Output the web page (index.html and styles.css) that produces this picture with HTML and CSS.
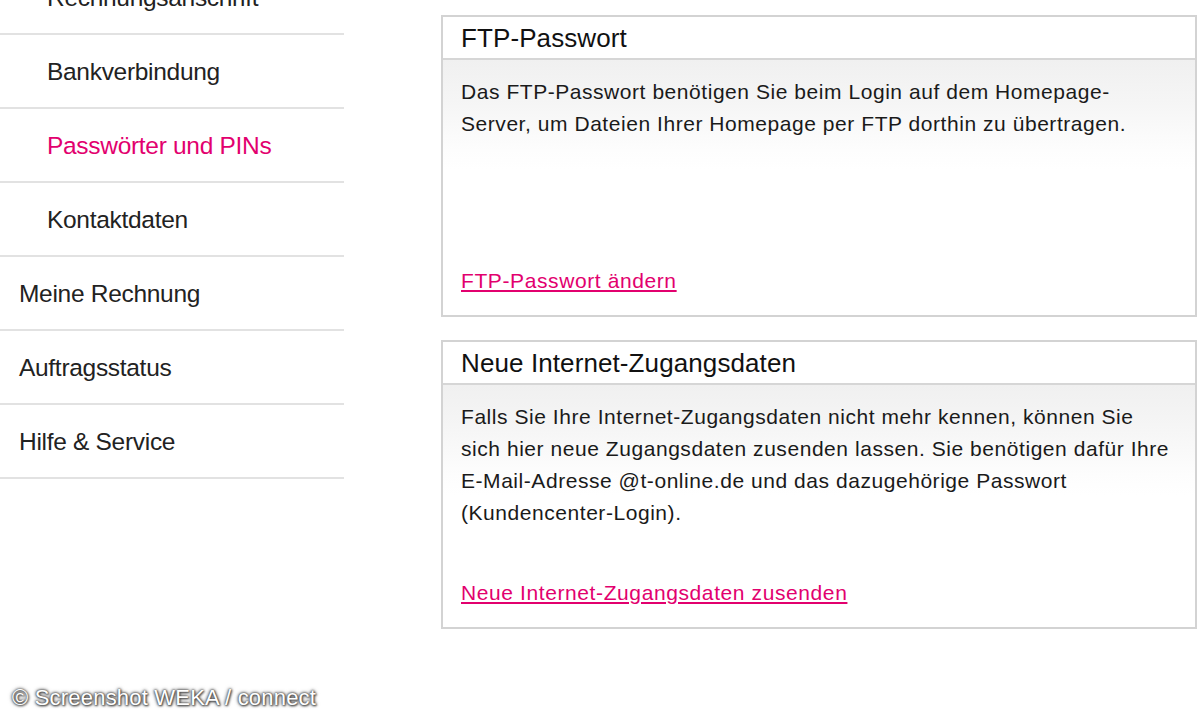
FILE: index.html
```html
<!DOCTYPE html>
<html lang="de">
<head>
<meta charset="utf-8">
<title>Passwörter und PINs</title>
<link rel="stylesheet" href="styles.css">
</head>
<body>
<div class="page">
  <nav class="sidebar">
    <a class="nav-item sub">Rechnungsanschrift</a>
    <a class="nav-item sub">Bankverbindung</a>
    <a class="nav-item sub active">Passwörter und PINs</a>
    <a class="nav-item sub">Kontaktdaten</a>
    <a class="nav-item">Meine Rechnung</a>
    <a class="nav-item">Auftragsstatus</a>
    <a class="nav-item">Hilfe &amp; Service</a>
  </nav>
  <main class="main">
    <section class="card card-fixed">
      <h2 class="card-title">FTP-Passwort</h2>
      <div class="card-body">
        <p class="card-text">Das FTP-Passwort benötigen Sie beim Login auf dem Homepage-<br>Server, um Dateien Ihrer Homepage per FTP dorthin zu übertragen.</p>
        <a class="card-link" href="#">FTP-Passwort ändern</a>
      </div>
    </section>
    <section class="card">
      <h2 class="card-title">Neue Internet-Zugangsdaten</h2>
      <div class="card-body">
        <p class="card-text">Falls Sie Ihre Internet-Zugangsdaten nicht mehr kennen, können Sie<br>sich hier neue Zugangsdaten zusenden lassen. Sie benötigen dafür Ihre<br>E-Mail-Adresse @t-online.de und das dazugehörige Passwort<br>(Kundencenter-Login).</p>
        <a class="card-link" href="#">Neue Internet-Zugangsdaten zusenden</a>
      </div>
    </section>
  </main>
</div>
<div class="watermark">© Screenshot WEKA / connect</div>
</body>
</html>
```

FILE: styles.css
```css
html, body {
  margin: 0;
  padding: 0;
  background: #fff;
  height: 720px;
  overflow: hidden;
}

body {
  font-family: "Liberation Sans", Arial, Helvetica, sans-serif;
  color: #1e1e1e;
  position: relative;
}

.page {
  display: flex;
  align-items: flex-start;
}

.sidebar {
  width: 344px;
  flex: none;
  display: flex;
  flex-direction: column;
  margin-top: -39px;
}

.nav-item {
  display: block;
  height: 72px;
  line-height: 74px;
  font-size: 24.5px;
  letter-spacing: -0.3px;
  color: #222;
  padding-left: 19px;
  border-bottom: 2px solid #e2e2e2;
  white-space: nowrap;
}

.nav-item.sub {
  padding-left: 47px;
}

.nav-item.active {
  color: #e2006e;
}

.main {
  margin-left: 97px;
  width: 756px;
  padding-top: 15px;
  display: flex;
  flex-direction: column;
  gap: 23px;
}

.card {
  border: 2px solid #d3d3d3;
  display: flex;
  flex-direction: column;
  background: #fff;
}

.card-fixed {
  height: 298px;
}

.card-title {
  margin: 0;
  height: 41px;
  line-height: 42px;
  font-size: 26px;
  letter-spacing: 0.1px;
  font-weight: normal;
  color: #111;
  padding-left: 18px;
  border-bottom: 2px solid #d6d6d6;
}

.card-body {
  flex: 1;
  display: flex;
  flex-direction: column;
  padding: 16px 20px 18px 18px;
  background: linear-gradient(#f0f0f0 0px, #f5f5f5 40px, #fdfdfd 90px, #fff 110px);
}

.card-text {
  margin: 0 0 48px 0;
  font-size: 21px;
  letter-spacing: 0.55px;
  line-height: 32px;
  color: #1a1a1a;
  white-space: nowrap;
}

.card-link {
  margin-top: auto;
  font-size: 21px;
  letter-spacing: 0.6px;
  line-height: 32px;
  color: #e2006e;
  text-decoration: underline;
  text-underline-offset: 2px;
  align-self: flex-start;
}

.watermark {
  position: absolute;
  left: 12px;
  top: 685px;
  font-size: 22px;
  line-height: 26px;
  color: #fff;
  letter-spacing: 0.2px;
  text-shadow: 0 0 2px #444, 0 0 3px #555, 0 0 4px #777, 1px 1px 2px #555;
}
```
